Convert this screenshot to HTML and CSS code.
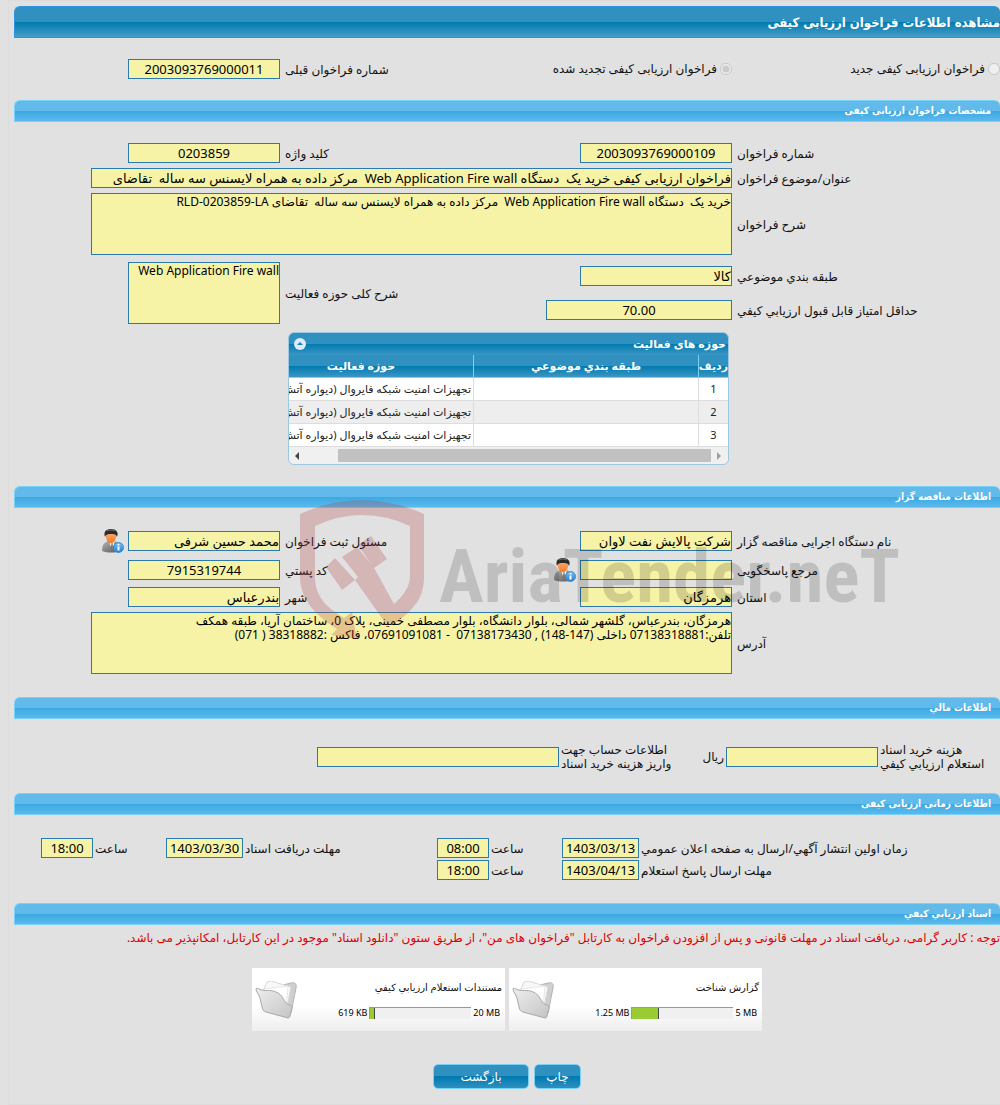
FILE: index.html
```html
<!DOCTYPE html>
<html lang="fa" dir="rtl">
<head>
<meta charset="utf-8">
<title>مشاهده اطلاعات فراخوان ارزیابی کیفی</title>
<link rel="stylesheet" href="styles.css">
</head>
<body>
<svg class="defs" width="0" height="0" aria-hidden="true">
  <defs>
    <linearGradient id="suit" x1="0" y1="0" x2="1" y2="1"><stop offset="0" stop-color="#b5b5b5"/><stop offset="1" stop-color="#555"/></linearGradient>
    <linearGradient id="face" x1="0" y1="0" x2="0" y2="1"><stop offset="0" stop-color="#ffb27a"/><stop offset="1" stop-color="#f27a25"/></linearGradient>
    <linearGradient id="badge" x1="0" y1="0" x2="0" y2="1"><stop offset="0" stop-color="#7cc0ee"/><stop offset="1" stop-color="#1f7fd0"/></linearGradient>
    <linearGradient id="flap" x1="0" y1="0" x2="1" y2="1"><stop offset="0" stop-color="#eee"/><stop offset="1" stop-color="#c4c4c4"/></linearGradient>
    <symbol id="user-info" viewBox="0 0 24 24">
      <path d="M1 22c0-6 2-9 7-10h5c4 1 6 4 6 10-5 2-13 2-18 0z" fill="url(#suit)"/>
      <path d="M8 12l3 9 3-9z" fill="#fff"/>
      <path d="M10.500 14h1l.8 6-1.300 2-1.300-2z" fill="#777"/>
      <ellipse cx="10" cy="8" rx="5" ry="6.200" fill="url(#face)"/>
      <path d="M4 8C2 2 6 0 10 0c5 0 8 3 6 8-1-3-3-3-6-3-3 0-5 0-6 3z" fill="#2a2a2a"/>
      <path d="M6 2c2-1.400 6-1.400 8 0" stroke="#777" fill="none"/>
      <circle cx="17.500" cy="18.500" r="5" fill="url(#badge)" stroke="#3a8fd4"/>
      <path d="M16.500 17.500h2v4h-2zM16.500 15h2v1.500h-2z" fill="#fff"/>
    </symbol>
    <symbol id="folder" viewBox="0 0 44 38">
      <path d="M24 5l12-3c4-1 6 1 5 5l-5 25-4 4z" fill="#cfcfcf" stroke="#b4b4b4"/>
      <path d="M8 10l4-9 4-1 20 6-4 20z" fill="#f8f8f8" stroke="#d8d8d8"/>
      <path d="M9 8l24-3-2 22z" fill="#fff" stroke="#e8e8e8"/>
      <path d="M1 8c0-1 1-1 3 0 6 3 11 0 17 3 8 3 7 10 13 13 2 0 3 1 3 3l-2 8c0 1-1 2-2 2L11 31c-3-1-3-2-4-5L5 17c-1-4-4-6-4-9z" fill="url(#flap)" stroke="#a8a8a8"/>
    </symbol>
  </defs>
</svg>
<main class="page">
  <h1 class="title">مشاهده اطلاعات فراخوان ارزیابی کیفی</h1>

  <div class="form form-kind">
    <label class="choice"><input type="radio" name="kind" disabled>فراخوان ارزیابی کیفی جدید</label>
    <label class="choice"><input type="radio" name="kind" checked disabled>فراخوان ارزیابی کیفی تجدید شده</label>
    <label class="label" for="prev">شماره فراخوان قبلی</label>
    <input class="field num" id="prev" value="2003093769000011" readonly>
  </div>

  <section>
    <h2 class="bar">مشخصات فراخوان ارزیابی کیفی</h2>
    <div class="form form-spec">
      <label class="label" for="no">شماره فراخوان</label>
      <input class="field num" id="no" value="2003093769000109" readonly>
      <label class="label" for="key">کلید واژه</label>
      <input class="field num" id="key" value="0203859" readonly>
      <label class="label first" for="subject">عنوان/موضوع فراخوان</label>
      <input class="field wide" id="subject" value="فراخوان ارزیابی کیفی خرید یک  دستگاه Web Application Fire wall  مرکز داده به همراه لایسنس سه ساله  تقاضای" readonly>
      <label class="label first" for="desc">شرح فراخوان</label>
      <textarea class="field wide area" id="desc" readonly>خرید یک  دستگاه Web Application Fire wall  مرکز داده به همراه لایسنس سه ساله  تقاضای RLD-0203859-LA</textarea>
    </div>
    <div class="form form-class">
      <label class="label first" for="cat">طبقه بندي موضوعي</label>
      <input class="field" id="cat" value="کالا" readonly>
      <label class="label tall" for="scope">شرح کلی حوزه فعالیت</label>
      <textarea class="field area tall" id="scope" readonly>Web Application Fire wall</textarea>
      <label class="label first" for="score">حداقل امتیاز قابل قبول ارزیابي کیفي</label>
      <input class="field num full" id="score" value="70.00" readonly>
    </div>
    <div class="form">
      <div class="grid-box">
        <div class="grid-caption"><span>حوزه های فعالیت</span>
          <button class="collapse" type="button" aria-label="بستن"><svg viewBox="0 0 12 12" width="12" height="12"><circle cx="6" cy="6" r="6" fill="#dcebf8"/><path d="M3 7l3-3 3 3z" fill="#1c7fb3"/></svg></button>
        </div>
        <div class="grid-view">
          <table class="grid">
            <colgroup><col class="c-row"><col class="c-main"><col class="c-main"></colgroup>
            <thead><tr><th>ردیف</th><th>طبقه بندي موضوعي</th><th>حوزه فعالیت</th></tr></thead>
            <tbody>
              <tr><td>1</td><td></td><td>تجهیزات امنیت شبکه فایروال (دیواره آتش</td></tr>
              <tr><td>2</td><td></td><td>تجهیزات امنیت شبکه فایروال (دیواره آتش</td></tr>
              <tr><td>3</td><td></td><td>تجهیزات امنیت شبکه فایروال (دیواره آتش</td></tr>
            </tbody>
          </table>
        </div>
        <div class="scroll">
          <svg viewBox="0 0 6 8" width="6" height="8"><path d="M1 0l4 4-4 4z" fill="#a0a0a0"/></svg>
          <div class="thumb"></div>
          <svg viewBox="0 0 6 8" width="6" height="8"><path d="M5 0L1 4l4 4z" fill="#444"/></svg>
        </div>
      </div>
    </div>
  </section>

  <section class="owner">
    <h2 class="bar">اطلاعات مناقصه گزار</h2>
    <div class="form form-owner">
      <label class="label first" for="org">نام دستگاه اجرایی مناقصه گزار</label>
      <input class="field" id="org" value="شرکت پالایش نفت لاوان" readonly>
      <label class="label" for="resp">مسئول ثبت فراخوان</label>
      <div class="with-icon"><input class="field" id="resp" value="محمد حسین شرفی" readonly><svg width="24" height="24"><use href="#user-info"/></svg></div>
      <label class="label first" for="ref">مرجع پاسخگویی</label>
      <div class="with-icon"><input class="field" id="ref" value="" readonly><svg width="24" height="24"><use href="#user-info"/></svg></div>
      <label class="label" for="post">کد پستي</label>
      <input class="field num" id="post" value="7915319744" readonly>
      <label class="label first" for="state">استان</label>
      <input class="field" id="state" value="هرمزگان" readonly>
      <label class="label" for="city">شهر</label>
      <input class="field" id="city" value="بندرعباس" readonly>
    </div>
    <div class="form form-address">
      <label class="label" for="addr">آدرس</label>
      <textarea class="field wide area" id="addr" readonly>هرمزگان، بندرعباس، گلشهر شمالی، بلوار دانشگاه، بلوار مصطفی خمینی، پلاک 0، ساختمان آریا، طبقه همکف
تلفن:07138318881 داخلی (147-148) , 07138173430  - 07691091081، فاکس :38318882 ( 071)</textarea>
    </div>
    <svg class="watermark" viewBox="0 0 600 145" width="600" height="145" aria-hidden="true">
      <g fill="#b4383c" fill-opacity=".25">
        <path fill-rule="evenodd" d="M0 14Q31 0 62 0T124 14V77C124 98 114 109 97 122Q89 127 84 121L55 80 58 77 42 57 57 47 73 66 94 104Q110 90 110 76V26Q86 15 62 15T15 26V77C15 96 26 107 44 118L52 112 57 139 31 135 37 129C16 116 0 99 0 77z"/>
        <path d="M35 58L26 67 42 90 55 80zM58 45L71 36 87 59 74 68z"/>
      </g>
      <text class="mark" x="139" y="102" direction="ltr">AriaTender.neT</text>
    </svg>
  </section>

  <section>
    <h2 class="bar">اطلاعات مالي</h2>
    <div class="money">
      <label class="label" for="cost">هزینه خرید اسناد<br>استعلام ارزیابي کیفي</label>
      <input class="field" id="cost" value="" readonly>
      <span>ریال</span>
      <label class="label" for="acc">اطلاعات حساب جهت<br>واریز هزینه خرید اسناد</label>
      <input class="field" id="acc" value="" readonly>
    </div>
  </section>

  <section>
    <h2 class="bar">اطلاعات زمانی ارزیابی کیفی</h2>
    <div class="times">
      <label class="label" for="d1">زمان اولین انتشار آگهي/ارسال به صفحه اعلان عمومي</label>
      <input class="field num" id="d1" value="1403/03/13" readonly>
      <label class="label" for="t1">ساعت</label>
      <input class="field num" id="t1" value="08:00" readonly>
      <label class="label" for="d2">مهلت دریافت اسناد</label>
      <input class="field num" id="d2" value="1403/03/30" readonly>
      <label class="label" for="t2">ساعت</label>
      <input class="field num" id="t2" value="18:00" readonly>
      <label class="label first" for="d3">مهلت ارسال پاسخ استعلام</label>
      <input class="field num" id="d3" value="1403/04/13" readonly>
      <label class="label" for="t3">ساعت</label>
      <input class="field num" id="t3" value="18:00" readonly>
    </div>
  </section>

  <section>
    <h2 class="bar">اسناد ارزیابي کیفي</h2>
    <p class="note">توجه : کاربر گرامی، دریافت اسناد در مهلت قانونی و پس از افزودن فراخوان به کارتابل "فراخوان های من"، از طریق ستون "دانلود اسناد" موجود در این کارتابل، امکانپذیر می باشد.</p>
    <div class="cards">
      <article class="card">
        <div class="card-text"><h3>گزارش شناخت</h3>
          <div class="size"><span dir="ltr">5 MB</span><div class="meter"><div style="width:26%"></div></div><span dir="ltr">1.25 MB</span></div></div>
        <svg width="44" height="38"><use href="#folder"/></svg>
      </article>
      <article class="card">
        <div class="card-text"><h3>مستندات استعلام ارزیابي کیفي</h3>
          <div class="size"><span dir="ltr">20 MB</span><div class="meter"><div style="width:5%"></div></div><span dir="ltr">619 KB</span></div></div>
        <svg width="44" height="38"><use href="#folder"/></svg>
      </article>
    </div>
  </section>

  <div class="actions">
    <button class="btn" type="button">چاپ</button>
    <button class="btn btn-back" type="button">بازگشت</button>
  </div>
</main>
</body>
</html>
```
FILE: styles.css
```css
* { box-sizing: border-box; }

body {
  margin: 0;
  background: #e1e1e1;
  color: #111;
  font: 12px/14px "Noto Sans", "DejaVu Sans", sans-serif;
}

.defs { position: absolute; }

.page {
  margin-left: 8px;
  padding: 5px 0 15px 5px;
  border: solid #dcdcdc;
  border-width: 1px 0 1px 1px;
}

h1, h2, h3, p { margin: 0; }

.title {
  height: 32px;
  margin-bottom: 21px;
  border: 1px solid #3194e0;
  border-right: 0;
  border-radius: 6px 6px 0 0;
  background: linear-gradient(#3090bf 50%, #007ab0 50%, #479dc6);
  color: #fff;
  font: bold 13px/32px "DejaVu Sans Condensed", "DejaVu Sans", sans-serif;
}

.bar {
  height: 22px;
  padding: 0 9px;
  border: 1px solid #79d1f7;
  border-right: 0;
  border-radius: 6px 6px 0 0;
  background: linear-gradient(#62baea 50%, #3ba9e2 50%, #5bb9ec);
  color: #fff;
  font: bold 10px/20px "DejaVu Sans Condensed", "DejaVu Sans", sans-serif;
}

.form {
  display: grid;
  grid-template-columns: 263fr 186px 256fr 189px 72fr;
  gap: 5px;
  align-items: center;
}

.form-kind { margin-bottom: 21px; }
.form-spec { margin-top: 21px; }
.form-class { row-gap: 6px; margin: 7px 0 8px; }
.form-owner { margin: 21px 0 5px; }
.form-address { margin-bottom: 23px; }

.label { padding-top: 1px; text-align: left; }
.first { grid-column: 1; }
.tall { grid-row: span 2; }

.field {
  width: 152px;
  height: 20px;
  margin: 0;
  padding: 0;
  border: 1px solid #2a7aaa;
  border-radius: 0;
  outline: 0;
  background: #f6f3a6;
  color: #000;
  font: 13px/18px "Noto Sans", "DejaVu Sans", sans-serif;
}

.num { direction: ltr; text-align: center; }
.full { width: 100%; }
.wide { grid-column: 2 / 5; width: 100%; }

.area {
  display: block;
  height: 62px;
  padding-top: 1px;
  overflow: hidden;
  resize: none;
  font-size: 12px;
  line-height: 14px;
}

.choice { display: flex; align-items: center; gap: 3px; white-space: nowrap; }
.choice input { width: 12px; height: 12px; margin: 0; }

.with-icon { display: flex; align-items: center; gap: 3px; height: 24px; }

.grid-box {
  grid-column: 2 / 4;
  margin: 0 3px 21px;
  border: 1px solid #9cc8e2;
  border-radius: 6px;
  overflow: hidden;
}

.grid-caption {
  display: flex;
  align-items: center;
  justify-content: space-between;
  height: 22px;
  padding: 0 2px 0 5px;
  background: linear-gradient(#3090bf 50%, #007ab0 50%, #3a96c4);
  color: #fff;
  font-size: 11px;
  font-weight: bold;
}

.collapse { display: flex; padding: 0; border: 0; background: none; }

.grid-view { overflow: hidden; }

.grid {
  width: 480px;
  table-layout: fixed;
  border-collapse: separate;
  border-spacing: 0;
  font-size: 11px;
}
.c-row { width: 30px; }
.c-main { width: 225px; }

.grid th, .grid td { height: 23px; padding: 0 2px; white-space: nowrap; overflow: hidden; }
.grid th {
  border: solid #79d1f7;
  border-width: 0 0 1px 1px;
  background: linear-gradient(#3090bf 50%, #007ab0 50%, #3a96c4);
  color: #fff;
  padding: 0;
}
.grid td {
  border: solid #ddd;
  border-width: 0 0 1px 1px;
  background: #fff;
  color: #222;
}
.grid td:first-child { text-align: center; }
.grid tr:nth-child(2) td { background: #eee; }

.scroll {
  display: flex;
  align-items: center;
  gap: 5px;
  height: 17px;
  padding: 0 6px 0 5px;
  background: #f0f0f0;
}
.thumb { flex: 1; height: 13px; margin-left: 33px; background: #c1c1c1; }

.owner { position: relative; }
.watermark { position: absolute; top: 14px; left: 286px; pointer-events: none; }
.mark {
  fill: #000;
  fill-opacity: .15;
  font: bold 75px "Roboto Condensed", "Liberation Sans", sans-serif;
}

.money {
  display: grid;
  grid-template-columns: 120fr 152px 40fr 121fr 242px 301fr;
  column-gap: 2px;
  align-items: center;
  margin: 23px 0 22px;
  white-space: nowrap;
}
.money .field { width: 100%; }

.times {
  display: grid;
  grid-template-columns: 359fr 77px 69fr 52px 190fr 77px 69fr 52px 25fr;
  gap: 2px;
  align-items: center;
  margin: 23px 0;
}
.times .field { width: 100%; }

.note { margin: 6px 0 23px; color: #e00000; white-space: nowrap; }

.cards { display: flex; justify-content: center; gap: 4px; margin-bottom: 33px; }
.card {
  display: flex;
  align-items: center;
  width: 253px;
  height: 63px;
  padding: 0 3px;
  background: linear-gradient(#fff 60%, #eee);
}
.card-text { flex: 1; }
.card h3 { margin-bottom: 12px; font-size: 10px; line-height: 14px; font-weight: normal; }
.size { display: flex; align-items: center; gap: 2px; padding-right: 2px; color: #000; font-size: 9px; }
.meter {
  direction: ltr;
  width: 102px;
  height: 12px;
  border: solid #999;
  border-width: 1px 0 0 1px;
  background: #f0f0f0;
}
.meter div { height: 100%; border-right: 1px solid #444; background: #9c3; }

.actions { display: flex; justify-content: center; gap: 5px; }
.btn {
  width: 47px;
  height: 25px;
  padding: 0;
  border: 1px solid #79d1f7;
  border-radius: 5px;
  background: linear-gradient(#3090bf 50%, #007ab0 50%, #2f8fbf);
  color: #fff;
  font: 12px/23px "Noto Sans", "DejaVu Sans", sans-serif;
}
.btn-back { width: 96px; }
```
